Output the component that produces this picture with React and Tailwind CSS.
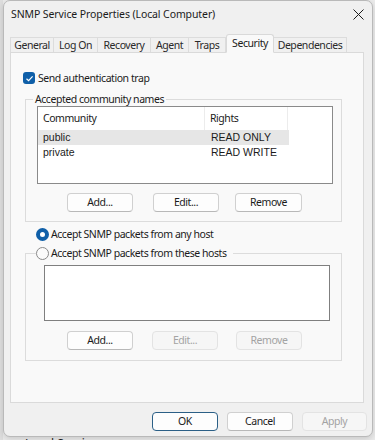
import React from "react";

const tabs = [
  { label: "General", w: "w-[44px]" },
  { label: "Log On", w: "w-[44px]" },
  { label: "Recovery", w: "w-[53px]" },
  { label: "Agent", w: "w-[38px]" },
  { label: "Traps", w: "w-[37px]" },
  { label: "Security", w: "w-[48px]", active: true },
  { label: "Dependencies", w: "w-[73px]" },
];

const txt = "text-[10.5px] tracking-[-0.45px]";

function Btn({ children, disabled, primary, className = "" }) {
  let look = "bg-[#fdfdfd] border-[#d0d0d0] border-b-[#b8b8b8] text-[#1b1b1b]";
  if (disabled) look = "bg-[#f6f6f6] border-[#e3e3e3] text-[#a3a3a3]";
  if (primary) look = "bg-[#fdfdfd] border-[#2b5f86] text-[#1b1b1b] shadow-[inset_0_0_0_1px_#fdfdfd]";
  return (
    <button
      type="button"
      className={`h-[19px] rounded-[4px] border ${txt} leading-none flex items-center justify-center ${look} ${className}`}
    >
      {children}
    </button>
  );
}

function CloseIcon() {
  return (
    <svg width="11" height="11" viewBox="0 0 11 11" className="text-[#1b1b1b]">
      <path d="M0.5 0.5 L10.5 10.5 M10.5 0.5 L0.5 10.5" stroke="currentColor" strokeWidth="1" fill="none" />
    </svg>
  );
}

export default function App() {
  return (
    <div className="w-[375px] h-[440px] overflow-hidden bg-[#ebebeb] flex font-['Noto_Sans',sans-serif] text-[#1b1b1b]">
      <div className="w-[3px] shrink-0 bg-[#dedede]" />
      <div className="flex flex-col shrink-0">
        <div className="w-[370px] h-[437px] shrink-0 rounded-[7px] border border-[#b9b9b9] bg-[#f0f0f0] flex flex-col shadow-[0_2px_6px_rgba(0,0,0,0.15)]">
          {/* title bar */}
          <div className="h-[33px] flex items-start pt-[5px] pl-[7px] pr-[7px]">
            <span className="text-[10.5px] tracking-[-0.1px] leading-[16px]">SNMP Service Properties (Local Computer)</span>
            <span className="ml-auto mt-[3px] mr-[1px]">
              <CloseIcon />
            </span>
          </div>

          {/* tabs */}
          <div className="ml-[6px] flex items-end h-[18px] relative z-10">
            {tabs.map((t) =>
              t.active ? (
                <div
                  key={t.label}
                  className={`${t.w} h-[19px] -mb-px bg-[#f9f9f9] border border-[#d9d9d9] border-b-[#f9f9f9] rounded-t-[3px] flex items-start justify-center pt-[1px] ${txt} leading-[14px] whitespace-nowrap`}
                >
                  {t.label}
                </div>
              ) : (
                <div
                  key={t.label}
                  className={`${t.w} h-[15px] border-t border-r border-[#dcdcdc] first:border-l flex items-start justify-center ${txt} leading-[14px] text-[#2a2a2a] whitespace-nowrap`}
                >
                  {t.label}
                </div>
              )
            )}
          </div>

          {/* panel */}
          <div className="ml-[6px] w-[354px] h-[351px] bg-[#f9f9f9] border border-[#dadada] flex flex-col">
            <div className="flex items-center mt-[18px] ml-[12px]">
              <span className="w-[12px] h-[12px] rounded-[3px] bg-[#0f5fa8] flex items-center justify-center">
                <svg width="9" height="9" viewBox="0 0 9 9">
                  <path d="M1.5 4.7 L3.6 6.7 L7.6 2.3" stroke="#fff" strokeWidth="1.2" fill="none" />
                </svg>
              </span>
              <span className={`ml-[3px] ${txt} leading-[14px]`}>Send authentication trap</span>
            </div>

            {/* group 1 */}
            <fieldset className="mt-[7px] ml-[14px] w-[317px] border border-[#dcdcdc] pb-[9px]">
              <legend className={`ml-[7px] px-[2px] ${txt} leading-[14px]`}>Accepted community names</legend>
              <div className="ml-[11px] w-[296px] h-[78px] border border-[#8a8a8a] bg-white">
                <div className="flex h-[23px]">
                  <div className={`w-[167px] border-r border-[#ececec] flex items-center pl-[5px] ${txt}`}>
                    Community
                  </div>
                  <div className={`w-[83px] border-r border-[#ececec] flex items-center pl-[5px] ${txt}`}>
                    Rights
                  </div>
                </div>
                <div className="flex h-[15px] w-[251px] bg-[#e6e6e6] items-center text-[10.5px] font-['Liberation_Sans',sans-serif]">
                  <span className="w-[168px] pl-[5px]">public</span>
                  <span className="pl-[5px]">READ ONLY</span>
                </div>
                <div className="flex h-[15px] w-[251px] items-center text-[10.5px] font-['Liberation_Sans',sans-serif]">
                  <span className="w-[168px] pl-[5px]">private</span>
                  <span className="pl-[5px]">READ WRITE</span>
                </div>
              </div>
              <div className="flex mt-[9px] ml-[41px]">
                <Btn className="w-[66px]">Add...</Btn>
                <Btn className="w-[66px] ml-[20px]">Edit...</Btn>
                <Btn className="w-[67px] ml-[16px]">Remove</Btn>
              </div>
            </fieldset>

            <div className="flex items-center mt-[5px] ml-[25px]">
              <span className="w-[13px] h-[13px] rounded-full border-[4px] border-[#0f5fa8] bg-white" />
              <span className={`ml-[2px] ${txt} leading-[14px]`}>Accept SNMP packets from any host</span>
            </div>

            {/* group 2 */}
            <fieldset className="mt-[5px] ml-[14px] w-[317px] border border-[#dcdcdc] pb-[10px]">
              <legend className={`ml-[10px] pr-[6px] flex items-center ${txt} leading-[14px]`}>
                <span className="w-[13px] h-[13px] rounded-full border border-[#8a8a8a] bg-[#fbfbfb]" />
                <span className="ml-[2px]">Accept SNMP packets from these hosts</span>
              </legend>
              <div className="mt-[5px] ml-[18px] w-[286px] h-[56px] border border-[#7f7f7f] bg-white" />
              <div className="flex mt-[10px] ml-[41px]">
                <Btn className="w-[66px]">Add...</Btn>
                <Btn disabled className="w-[66px] ml-[19px]">Edit...</Btn>
                <Btn disabled className="w-[66px] ml-[18px]">Remove</Btn>
              </div>
            </fieldset>
          </div>

          {/* bottom buttons */}
          <div className="flex mt-[9px] ml-[148px]">
            <Btn primary className="w-[66px]">OK</Btn>
            <Btn className="w-[66px] ml-[9px]">Cancel</Btn>
            <Btn disabled className="w-[65px] ml-[9px]">Apply</Btn>
          </div>
        </div>
        <div className="ml-[22px] text-[12px] leading-[14px] text-[#1b1b1b]">Local Service</div>
      </div>
    </div>
  );
}
